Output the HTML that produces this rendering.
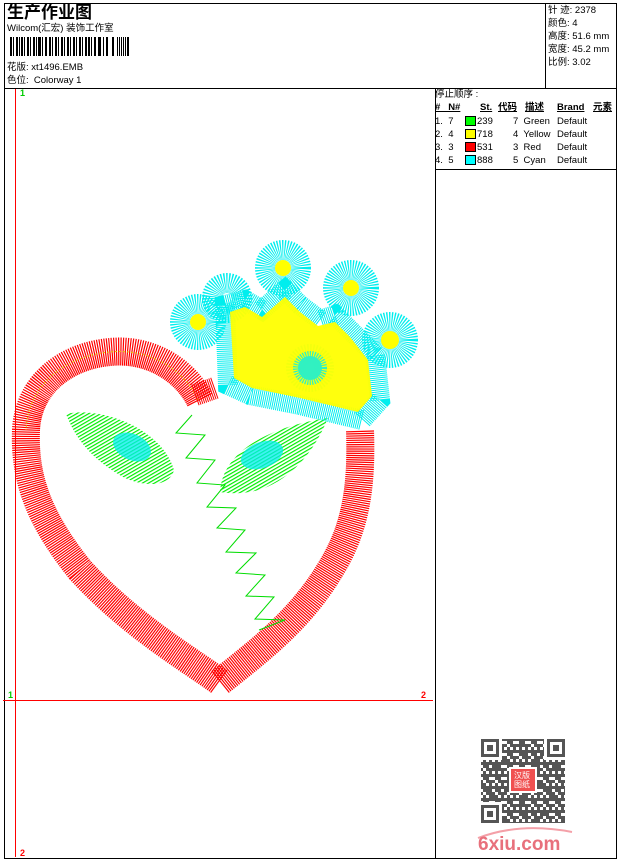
<!DOCTYPE html>
<html><head><meta charset="utf-8"><style>
html,body{margin:0;padding:0;background:#fff;}
body{width:620px;height:860px;overflow:hidden;position:relative;font-family:"Liberation Sans","WenQuanYi Zen Hei","Noto Sans CJK SC",sans-serif;}
.t{position:absolute;font-size:9.5px;color:#000;white-space:nowrap;line-height:11px;}
</style></head><body>
<svg width="620" height="860" style="position:absolute;left:0;top:0">
<defs>
<pattern id="gh" width="3" height="3" patternUnits="userSpaceOnUse" patternTransform="rotate(60)"><rect width="1.2" height="3" fill="#0e0"/></pattern>
<pattern id="qr" width="12" height="12" patternUnits="userSpaceOnUse">
<rect width="12" height="12" fill="#fff"/>
<g fill="#555"><rect x="0" y="0" width="3" height="3"/><rect x="6" y="0" width="6" height="3"/><rect x="3" y="3" width="3" height="3"/><rect x="9" y="3" width="3" height="6"/><rect x="0" y="6" width="6" height="3"/><rect x="3" y="9" width="3" height="3"/><rect x="6" y="6" width="3" height="6"/></g>
</pattern>
<pattern id="qr2" width="15" height="15" patternUnits="userSpaceOnUse">
<g fill="#555"><rect x="0" y="3" width="3" height="3"/><rect x="9" y="9" width="3" height="3"/><rect x="12" y="0" width="3" height="3"/></g>
</pattern>
</defs>
<!-- frame -->
<rect x="4.5" y="3.5" width="612" height="855" fill="none" stroke="#000" stroke-width="1"/>
<line x1="4" y1="88.5" x2="617" y2="88.5" stroke="#000"/>
<line x1="545.5" y1="3" x2="545.5" y2="88" stroke="#000"/>
<line x1="435.5" y1="88" x2="435.5" y2="859" stroke="#000"/>
<line x1="435" y1="169.5" x2="617" y2="169.5" stroke="#000"/>
<line x1="15.5" y1="89" x2="15.5" y2="857" stroke="#f00"/>
<line x1="3" y1="700.5" x2="433" y2="700.5" stroke="#f00"/>
<!-- barcode -->
<g fill="#000">
<rect x="10" y="37" width="2" height="19"/><rect x="13" y="37" width="1" height="19"/><rect x="16" y="37" width="2" height="19"/><rect x="19" y="37" width="1" height="19"/><rect x="21" y="37" width="2" height="19"/><rect x="24" y="37" width="1" height="19"/><rect x="27" y="37" width="2" height="19"/><rect x="30" y="37" width="1" height="19"/><rect x="33" y="37" width="2" height="19"/><rect x="36" y="37" width="1" height="19"/><rect x="38" y="37" width="3" height="19"/><rect x="42" y="37" width="1" height="19"/><rect x="45" y="37" width="2" height="19"/><rect x="49" y="37" width="2" height="19"/><rect x="52" y="37" width="1" height="19"/><rect x="55" y="37" width="2" height="19"/><rect x="58" y="37" width="1" height="19"/><rect x="61" y="37" width="2" height="19"/><rect x="64" y="37" width="1" height="19"/><rect x="67" y="37" width="2" height="19"/><rect x="70" y="37" width="1" height="19"/><rect x="73" y="37" width="2" height="19"/><rect x="76" y="37" width="1" height="19"/><rect x="79" y="37" width="2" height="19"/><rect x="82" y="37" width="1" height="19"/><rect x="85" y="37" width="2" height="19"/><rect x="88" y="37" width="2" height="19"/><rect x="91" y="37" width="1" height="19"/><rect x="94" y="37" width="2" height="19"/><rect x="98" y="37" width="3" height="19"/><rect x="103" y="37" width="1" height="19"/><rect x="106" y="37" width="2" height="19"/><rect x="112" y="37" width="2" height="19"/><rect x="117" y="37" width="1" height="19"/><rect x="119" y="37" width="1" height="19"/><rect x="121" y="37" width="1" height="19"/><rect x="123" y="37" width="1" height="19"/><rect x="125" y="37" width="1" height="19"/><rect x="127" y="37" width="2" height="19"/>
</g>
<!-- heart -->
<path d="M200,400 C185,370 150,348 110,352 C65,356 28,385 26,430 C24,480 40,520 80,570 C130,625 190,660 220,682 C260,650 300,620 330,570 C355,530 362,490 360,430" fill="none" stroke="#f00" stroke-width="28" stroke-dasharray="1.2 1"/>
<path d="M198,400 C185,370 150,348 110,352 C65,356 28,385 26,430" fill="none" stroke="#e0d000" stroke-width="1" stroke-dasharray="2 2"/>
<path d="M195,395 L215,388" stroke="#f00" stroke-width="22" stroke-dasharray="1 1"/>
<!-- zigzag -->
<polyline points="192,415 176,433 205,435 186,458 215,460 197,483 225,485 207,507 236,508 217,528 245,530 226,552 256,553 236,573 265,575 246,596 274,597 255,619 285,620 259,630" fill="none" stroke="#0d0" stroke-width="1"/>
<!-- leaves -->
<path d="M66,414 C100,406 162,428 174,470 C170,488 140,488 118,474 C92,458 76,440 66,414Z" fill="url(#gh)"/>
<ellipse cx="132" cy="447" rx="20" ry="13" fill="#0ee" opacity=".75" transform="rotate(25 132 447)"/>
<path d="M220,492 C222,455 262,428 328,418 C314,452 292,478 262,489 C246,494 232,494 220,492Z" fill="url(#gh)"/>
<ellipse cx="262" cy="455" rx="22" ry="13" fill="#0ee" opacity=".75" transform="rotate(-20 262 455)"/>
<!-- crown -->
<g stroke="#0ee" stroke-width="20" stroke-dasharray="1 1" fill="none">
<polygon points="225,305 245,300 262,310 285,290 300,305 320,320 335,315 350,330 375,355 380,400 362,420 300,405 250,395 228,385"/>
<circle cx="198" cy="322" r="18"/><circle cx="283" cy="268" r="18"/><circle cx="351" cy="288" r="18"/><circle cx="390" cy="340" r="18"/><circle cx="227" cy="298" r="15"/><circle cx="310" cy="368" r="14"/>
</g>
<polygon points="230,312 245,307 262,317 285,297 300,312 318,326 335,322 350,337 368,360 372,396 358,412 300,398 252,388 234,378" fill="#ff0" opacity=".95"/>
<g fill="#ff0"><circle cx="198" cy="322" r="8"/><circle cx="283" cy="268" r="8"/><circle cx="351" cy="288" r="8"/><circle cx="390" cy="340" r="9"/></g>
<circle cx="310" cy="368" r="12" stroke="#0ee" stroke-width="10" stroke-dasharray="1 1" fill="#0ee" opacity=".8"/>
<!-- color swatches -->
<rect x="465.5" y="116.5" width="10" height="9" fill="#0f0" stroke="#000"/>
<rect x="465.5" y="129.5" width="10" height="9" fill="#ff0" stroke="#000"/>
<rect x="465.5" y="142.5" width="10" height="9" fill="#f00" stroke="#000"/>
<rect x="465.5" y="155.5" width="10" height="9" fill="#0ff" stroke="#000"/>
<!-- QR -->
<rect x="481" y="739" width="84" height="84" fill="url(#qr)"/>
<rect x="481" y="739" width="84" height="84" fill="url(#qr2)"/>
<rect x="481" y="739" width="21" height="21" fill="#fff"/><rect x="544" y="739" width="21" height="21" fill="#fff"/><rect x="481" y="802" width="21" height="21" fill="#fff"/>
<rect x="481" y="739" width="18" height="18" fill="#555"/><rect x="484" y="742" width="12" height="12" fill="#fff"/><rect x="487" y="745" width="6" height="6" fill="#555"/>
<rect x="547" y="739" width="18" height="18" fill="#555"/><rect x="550" y="742" width="12" height="12" fill="#fff"/><rect x="553" y="745" width="6" height="6" fill="#555"/>
<rect x="481" y="805" width="18" height="18" fill="#555"/><rect x="484" y="808" width="12" height="12" fill="#fff"/><rect x="487" y="811" width="6" height="6" fill="#555"/>
<rect x="509" y="767" width="28" height="26" fill="#fff"/>
<rect x="511" y="769" width="24" height="22" fill="#f05050"/>
<path d="M478,838 Q520,822 572,832" fill="none" stroke="#f4a0a8" stroke-width="2"/>
<text x="478" y="850" font-family="Liberation Sans,sans-serif" font-weight="bold" font-size="19" fill="#e8707c">6xiu.com</text>
</svg>
<div class="t" style="left:7px;top:3px;font-size:17px;font-weight:bold;line-height:19px">生产作业图</div>
<div class="t" style="left:7px;top:23px">Wilcom(汇宏) 装饰工作室</div>
<div class="t" style="left:7px;top:62px">花版: xt1496.EMB</div>
<div class="t" style="left:7px;top:75px">色位:&nbsp; Colorway 1</div>
<div class="t" style="left:20px;top:88px;color:#0c0;font-size:9px;font-weight:bold">1</div>
<div class="t" style="left:8px;top:690px;color:#0c0;font-size:9px;font-weight:bold">1</div>
<div class="t" style="left:421px;top:690px;color:#f00;font-size:9px;font-weight:bold">2</div>
<div class="t" style="left:20px;top:848px;color:#f00;font-size:9px;font-weight:bold">2</div>
<div class="t" style="left:548px;top:5px">针 迹: 2378</div>
<div class="t" style="left:548px;top:18px">颜色: 4</div>
<div class="t" style="left:548px;top:31px">高度: 51.6 mm</div>
<div class="t" style="left:548px;top:44px">宽度: 45.2 mm</div>
<div class="t" style="left:548px;top:57px">比例: 3.02</div>
<div class="t" style="left:435px;top:89px">停止顺序 :</div>
<div class="t" style="left:435px;top:102px;font-weight:bold;text-decoration:underline">#&nbsp;&nbsp;&nbsp;N#</div>
<div class="t" style="left:480px;top:102px;font-weight:bold;text-decoration:underline">St.</div>
<div class="t" style="left:498px;top:102px;font-weight:bold;text-decoration:underline">代码</div>
<div class="t" style="left:525px;top:102px;font-weight:bold;text-decoration:underline">描述</div>
<div class="t" style="left:557px;top:102px;font-weight:bold;text-decoration:underline">Brand</div>
<div class="t" style="left:593px;top:102px;font-weight:bold;text-decoration:underline">元素</div>
<div class="t" style="left:435px;top:116px">1.&nbsp; 7</div><div class="t" style="left:477px;top:116px">239</div><div class="t" style="left:513px;top:116px">7&nbsp; Green</div><div class="t" style="left:557px;top:116px">Default</div>
<div class="t" style="left:435px;top:129px">2.&nbsp; 4</div><div class="t" style="left:477px;top:129px">718</div><div class="t" style="left:513px;top:129px">4&nbsp; Yellow</div><div class="t" style="left:557px;top:129px">Default</div>
<div class="t" style="left:435px;top:142px">3.&nbsp; 3</div><div class="t" style="left:477px;top:142px">531</div><div class="t" style="left:513px;top:142px">3&nbsp; Red</div><div class="t" style="left:557px;top:142px">Default</div>
<div class="t" style="left:435px;top:155px">4.&nbsp; 5</div><div class="t" style="left:477px;top:155px">888</div><div class="t" style="left:513px;top:155px">5&nbsp; Cyan</div><div class="t" style="left:557px;top:155px">Default</div>
<div class="t" style="left:514px;top:771px;color:#fff;font-size:8px;line-height:9px">汉版<br>图纸</div>
</body></html>
